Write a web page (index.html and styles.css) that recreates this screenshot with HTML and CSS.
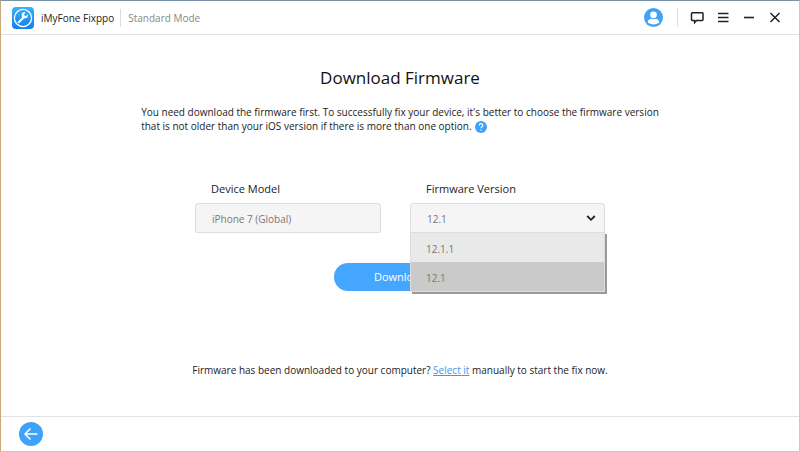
FILE: index.html
```html
<!DOCTYPE html>
<html lang="en">
<head>
<meta charset="utf-8">
<meta name="viewport" content="width=device-width, initial-scale=1">
<title>iMyFone Fixppo</title>
<link rel="stylesheet" href="styles.css">
</head>
<body>
<div class="window">
  <header class="titlebar">
    <svg class="logo" viewBox="0 0 22 22" aria-hidden="true">
      <defs><linearGradient id="logo-fill" x1="0" y1="0" x2="0" y2="1"><stop offset="0" stop-color="#35b4fa"/><stop offset="1" stop-color="#147df0"/></linearGradient></defs>
      <rect width="22" height="22" rx="4" fill="url(#logo-fill)"/>
      <circle cx="11" cy="11" r="8.6" fill="none" stroke="#fff" stroke-width="1.3"/>
      <path d="M6.800 15.200 12 10" stroke="#fff" stroke-width="2" stroke-linecap="round"/>
      <path d="M15.900 7.200a3.200 3.200 0 1 1-2.300-2.200L12.200 7l.4 1.700 1.600.3z" fill="#fff"/>
    </svg>
    <span class="app-name">iMyFone Fixppo</span>
    <span class="mode">Standard Mode</span>
    <nav class="tools" aria-label="Window">
      <button class="tool account" type="button" aria-label="Account">
        <svg width="19" height="19" viewBox="0 0 18 18"><circle cx="9" cy="9" r="9" fill="#3ea2fb"/><circle cx="9" cy="6.500" r="3.200" fill="#fff"/><path d="M3.400 13.500c.3-2.200 2-3.200 3.500-3.400 1.200.9 3 .9 4.200 0 1.500.2 3.200 1.200 3.500 3.400-2.800 2.700-8.400 2.700-11.200 0z" fill="#fff"/></svg>
      </button>
      <button class="tool" type="button" aria-label="Feedback">
        <svg width="14" height="14" viewBox="0 0 14 14" fill="none" stroke="#222" stroke-width="1.500"><path d="M2.300 1.800h9.900q.8 0 .8.800v6q0 .8-.8.800H6.600L4.600 11.600V9.400H2.300q-.8 0-.8-.8v-6q0-.8.800-.8z"/></svg>
      </button>
      <button class="tool" type="button" aria-label="Menu">
        <svg width="14" height="14" viewBox="0 0 14 14" stroke="#222" stroke-width="1.500"><path d="M2 2.500h10.500M2 6.500h10.500M2 10.500h10.500"/></svg>
      </button>
      <button class="tool" type="button" aria-label="Minimize">
        <svg width="14" height="14" viewBox="0 0 14 14" stroke="#222" stroke-width="1.600"><path d="M2 6.500h10"/></svg>
      </button>
      <button class="tool" type="button" aria-label="Close">
        <svg width="14" height="14" viewBox="0 0 14 14" stroke="#222" stroke-width="1.500"><path d="m2.500 2 9 9m0-9-9 9"/></svg>
      </button>
    </nav>
  </header>

  <main class="content">
    <h1>Download Firmware</h1>
    <p class="intro">You need download the firmware first. To successfully fix your device, it's better to choose the firmware version<br>that is not older than your iOS version if there is more than one option. <button class="help" type="button" aria-label="Help"><svg width="12" height="12" viewBox="0 0 12 12" fill="none" stroke="#fff" stroke-width="1.200"><path d="M4.300 4.500c0-2.400 3.500-2.300 3.500-.2C7.800 5.700 6 5.700 6 7.300M6 8.400v1.300"/></svg></button></p>

    <form class="form">
      <div class="fields">
        <div class="field">
          <label for="model">Device Model</label>
          <input id="model" class="control" type="text" value="iPhone 7 (Global)" readonly>
        </div>
        <div class="field">
          <label for="version">Firmware Version</label>
          <div class="picker">
            <select id="version" class="control">
              <option>12.1.1</option>
              <option selected>12.1</option>
            </select>
            <svg class="chevron" width="10" height="8" viewBox="0 0 10 8" fill="none" stroke="#222" stroke-width="1.800" aria-hidden="true"><path d="m1.200 2 3.800 3.800L8.800 2"/></svg>
            <ul class="menu">
              <li><button type="button">12.1.1</button></li>
              <li><button type="button" class="current">12.1</button></li>
            </ul>
          </div>
        </div>
      </div>
      <button class="download" type="button">Download</button>
    </form>

    <p class="manual">Firmware has been downloaded to your computer? <a href="#">Select it</a> manually to start the fix now.</p>
  </main>

  <footer class="footer">
    <button class="back" type="button" aria-label="Back">
      <svg width="24" height="24" viewBox="0 0 24 24" fill="none" stroke="#fff" stroke-width="1.500"><path d="M18.500 12H6M11.500 6.500 6 12l5.500 5.500"/></svg>
    </button>
  </footer>
</div>
</body>
</html>
```
FILE: styles.css
```css
* {
  box-sizing: border-box;
}

body {
  margin: 0;
  background: #fff;
  color: #222;
  font: 10px/14px "Open Sans", "Noto Sans", sans-serif;
}

button,
input,
select {
  font: inherit;
}

button {
  padding: 0;
  border: 0;
  cursor: pointer;
}

.window {
  display: flex;
  flex-direction: column;
  min-height: 100vh;
  border: 1px solid #c8c8c8;
  border-top-color: #7893a8;
  border-left-color: #c9a97b;
}

.titlebar {
  display: flex;
  align-items: center;
  height: 34px;
  padding: 0 17px 0 11px;
  border-bottom: 1px solid #e2e2e2;
}

.logo {
  width: 22px;
  height: 22px;
}

.app-name {
  margin-left: 7px;
}

.mode {
  margin-left: 6px;
  padding-left: 7px;
  border-left: 1px solid #ddd;
  color: #888;
  line-height: 18px;
}

.tools {
  display: flex;
  align-items: center;
  gap: 12px;
  margin-left: auto;
}

.tool {
  display: flex;
  background: none;
}

.account {
  padding-right: 14px;
  border-right: 1px solid #ddd;
}

.content {
  flex: 1;
  display: flex;
  flex-direction: column;
  align-items: center;
}

h1 {
  margin: 31px 0 0;
  color: #111;
  font-size: 17px;
  font-weight: 400;
  line-height: 24px;
}

.intro {
  margin: 15px 0 0;
}

.help {
  display: inline-flex;
  margin-left: 1px;
  border-radius: 50%;
  background: #3ea2fb;
  vertical-align: middle;
}

.form {
  display: flex;
  flex-direction: column;
  align-items: center;
  gap: 30px;
  width: 100%;
  max-width: 410px;
  margin-top: 48px;
}

.fields {
  display: grid;
  grid-template-columns: 186fr 195fr;
  gap: 29px;
  width: 100%;
}

.field label {
  display: block;
  margin-bottom: 6px;
  padding-left: 16px;
  font-size: 11px;
  line-height: 16px;
}

.control {
  display: block;
  width: 100%;
  height: 30px;
  padding: 2px 16px 0;
  border: 1px solid #ddd;
  border-radius: 3px;
  background: #f5f5f5;
  color: #777;
  appearance: none;
}

.picker {
  position: relative;
}

.chevron {
  position: absolute;
  top: 11px;
  right: 9px;
  pointer-events: none;
}

.menu {
  position: absolute;
  z-index: 1;
  top: 29px;
  left: 0;
  width: 100%;
  margin: 0;
  padding: 0;
  border: 1px solid #ddd;
  box-shadow: 2px 2px 0 #999;
  list-style: none;
}

.menu button {
  display: block;
  width: 100%;
  height: 29px;
  padding: 2px 15px 0;
  background: #e9e9e9;
  color: #777;
  text-align: left;
}

.menu .current {
  background: #cacaca;
}

.download {
  width: 132px;
  height: 28px;
  border-radius: 14px;
  background: #45a6ff;
  color: #fff;
  font-size: 11px;
}

.manual {
  margin: 72px 0 0;
  text-align: center;
}

.manual a {
  color: #4a94f0;
}

.footer {
  display: flex;
  align-items: center;
  height: 35px;
  padding: 0 18px;
  border-top: 1px solid #e2e2e2;
}

.back {
  display: flex;
  border-radius: 50%;
  background: #3ea2fb;
}
```
